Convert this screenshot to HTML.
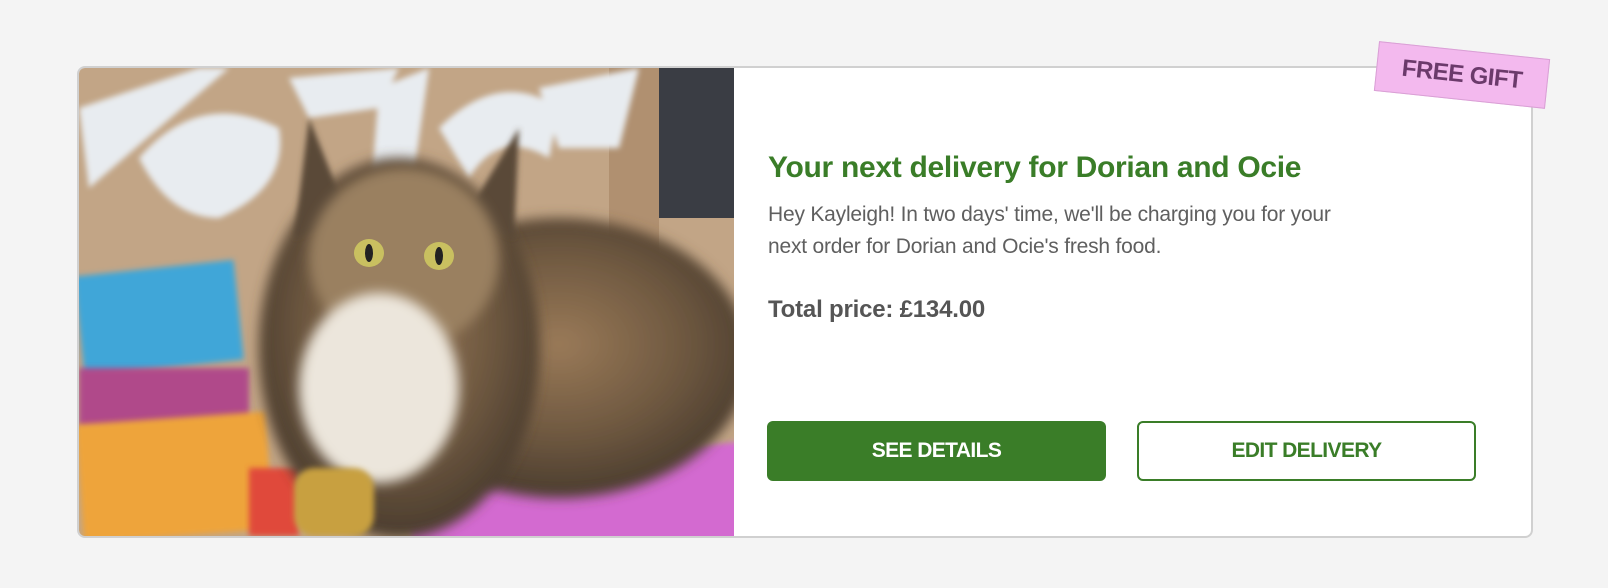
<!DOCTYPE html>
<html><head><meta charset="utf-8"><style>
*{margin:0;padding:0;box-sizing:border-box}
body{width:1608px;height:588px;background:#f4f4f4;font-family:"Liberation Sans",sans-serif;position:relative;overflow:hidden}
.card{position:absolute;left:77px;top:66px;width:1456px;height:472px;background:#fff;border:2px solid #d0d0d0;border-radius:8px;overflow:hidden}
.img{position:absolute;left:0;top:0;width:655px;height:468px;overflow:hidden}
h1{position:absolute;left:689px;top:83px;font-size:30px;color:#3a7d28;font-weight:bold;letter-spacing:-0.3px;white-space:nowrap}
p{position:absolute;left:689px;top:131px;font-size:21px;line-height:32px;color:#5f5f5f;width:605px;letter-spacing:-0.2px}
.price{position:absolute;left:689px;top:228px;font-size:24px;font-weight:bold;color:#555;letter-spacing:-0.2px}
.btn{position:absolute;top:353px;width:339px;height:60px;border-radius:6px;font-size:21px;font-weight:bold;display:flex;align-items:center;justify-content:center;letter-spacing:-0.6px}
.b1{left:688px;background:#3a7d28;color:#fff}
.b2{left:1058px;border:2px solid #3a7d28;color:#3a7d28;background:#fff}
.tag{position:absolute;left:1376px;top:50px;width:172px;height:50px;background:#f3b9ee;border:1px solid #d9a0d5;transform:rotate(6deg);color:#6b3a6b;font-weight:bold;font-size:24px;display:flex;align-items:center;justify-content:center;letter-spacing:-0.5px}
</style></head><body>
<div class="card">
<div class="img">
<svg width="655" height="468" viewBox="0 0 655 468">
<defs><filter id="b"><feGaussianBlur stdDeviation="6"/></filter><filter id="b2"><feGaussianBlur stdDeviation="3"/></filter>
<radialGradient id="cat" cx="50%" cy="45%" r="55%"><stop offset="0" stop-color="#9a7a58"/><stop offset=".6" stop-color="#6e5840"/><stop offset="1" stop-color="#4a3c2e"/></radialGradient></defs>
<rect width="655" height="468" fill="#c2a586"/>
<rect x="580" y="0" width="75" height="150" fill="#3a3d44"/>
<rect x="530" y="0" width="50" height="200" fill="#b09070"/>
<g fill="#e8ecf0" filter="url(#b2)">
<path d="M0 40 L120 0 L150 0 L10 120Z"/><path d="M60 90 Q120 20 200 60 Q210 120 140 150 Q90 150 60 90Z"/>
<path d="M210 10 L320 0 L300 40 L230 50Z"/><path d="M300 20 L350 0 L330 140 L290 150Z"/>
<path d="M360 60 Q420 0 480 40 L470 90 Q420 60 390 110Z"/><path d="M460 20 L560 0 L540 80 L480 80Z"/>
</g>
<rect x="0" y="200" width="160" height="100" fill="#3fa6d8" filter="url(#b2)" transform="rotate(-6 80 250)"/>
<rect x="0" y="300" width="170" height="60" fill="#b0488a" filter="url(#b2)"/>
<rect x="0" y="350" width="190" height="118" fill="#eea43a" filter="url(#b2)" transform="rotate(-4 95 400)"/>
<rect x="170" y="400" width="50" height="68" fill="#e04a3a" filter="url(#b2)"/>
<rect x="330" y="390" width="335" height="100" fill="#d36ad0" filter="url(#b2)" transform="rotate(-5 480 430)"/>
<ellipse cx="480" cy="290" rx="190" ry="140" fill="url(#cat)" filter="url(#b)"/>
<ellipse cx="320" cy="280" rx="140" ry="190" fill="url(#cat)" filter="url(#b)"/>
<path d="M230 50 L270 150 L215 170Z M440 60 L385 150 L435 170Z" fill="#5a4a38" filter="url(#b2)"/>
<ellipse cx="325" cy="190" rx="95" ry="90" fill="#9a8060" filter="url(#b)"/>
<ellipse cx="290" cy="185" rx="15" ry="14" fill="#c9c060"/><ellipse cx="360" cy="188" rx="15" ry="14" fill="#c9c060"/>
<ellipse cx="290" cy="185" rx="4" ry="9" fill="#222"/><ellipse cx="360" cy="188" rx="4" ry="9" fill="#222"/>
<ellipse cx="300" cy="320" rx="80" ry="95" fill="#ece6dc" filter="url(#b)"/>
<rect x="215" y="400" width="80" height="68" rx="20" fill="#c8a040" filter="url(#b2)"/>
</svg>
</div>
<h1>Your next delivery for Dorian and Ocie</h1>
<p>Hey Kayleigh! In two days' time, we'll be charging you for your next order for Dorian and Ocie's fresh food.</p>
<div class="price">Total price: £134.00</div>
<div class="btn b1">SEE DETAILS</div>
<div class="btn b2">EDIT DELIVERY</div>
</div>
<div class="tag">FREE GIFT</div>
</body></html>
